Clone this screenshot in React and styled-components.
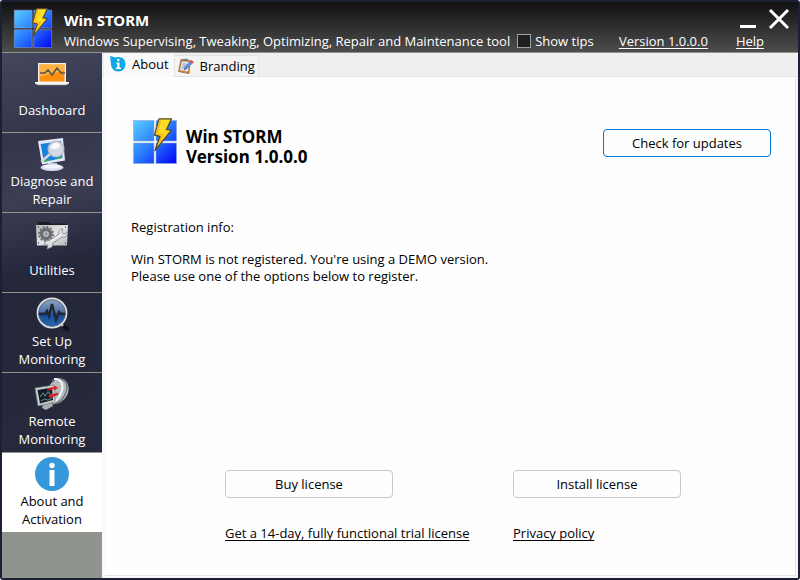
import styled, { createGlobalStyle } from "styled-components";
import { useId, useState } from "react";

const Globalstyle = createGlobalStyle`
  * { box-sizing: border-box; }
  body {
    margin: 0;
    background: #fff;
    font-family: "Open Sans", "Noto Sans", sans-serif;
    font-size: 13px;
    line-height: 18px;
    color: #000;
  }
  h1, h2, p { margin: 0; }
  h1, h2 { font-family: "Noto Sans", sans-serif; }
  button, input { font: inherit; }
  svg { display: block; }
`;

const Logo = ({ size }) => {
  const id = useId();
  return (
    <svg width={size} height={size} viewBox="0 0 44 46" aria-hidden="true">
      <defs>
        <linearGradient id={id} gradientUnits="userSpaceOnUse" x1="0" y1="2" x2="44" y2="46">
          <stop offset="0" stopColor="#5cd0ff" />
          <stop offset="0.5" stopColor="#2878ff" />
          <stop offset="1" stopColor="#0000f4" />
        </linearGradient>
      </defs>
      <path
        d="M.5 2.500h20.500v20.500H.5zM23 2.500h20.500v20.500H23zM.5 25h20.500v20.500H.5zM23 25h20.500v20.500H23z"
        fill={`url(#${id})`}
        stroke="#8ba6d6"
        strokeWidth="0.6"
      />
      <path
        d="M26 .8L38.500 .8L33.500 11.500L38.500 12.200L22 32.500L27 18.500L21.500 17Z"
        fill="#ffdd22"
        stroke="#514a32"
        strokeWidth="1.300"
        strokeLinejoin="round"
      />
      <path d="M27.500 2.500L24 15.500L30 17L26 26" fill="none" stroke="#ffb31a" strokeWidth="1.500" />
    </svg>
  );
};

const LaptopIcon = () => (
  <svg width="36" height="36" viewBox="0 0 36 36" aria-hidden="true">
    <path d="M4 7h28v20H4z" fill="#f5f1ea" />
    <path d="M5.500 8.500h25v17h-25z" fill="#fb8f12" />
    <path d="M5.500 8.500h25v6l-25 6z" fill="#ffb347" />
    <path d="M6 17h5l3-3 4 5 5-7 4 5h4" fill="none" stroke="#5b554c" strokeWidth="1.600" />
    <path d="M1 26h13l1 1h6l1-1h13v1.500L32 29H4l-3-1.500z" fill="#f7f5f1" />
    <path d="M4 29h28" stroke="#8a8a92" strokeWidth="0.600" />
  </svg>
);

const DiagnoseIcon = () => (
  <svg width="36" height="36" viewBox="0 0 36 36" aria-hidden="true">
    <path d="M14 27h9l1 4h-9z" fill="#bfc2e0" />
    <ellipse cx="18" cy="31.500" rx="11.500" ry="3.500" fill="#d9dbf2" />
    <ellipse cx="18" cy="30.500" rx="9" ry="2" fill="#f3f3ff" />
    <path d="M4 5L29 2L31 24.500L8 28.500z" fill="#e8e8fb" />
    <path d="M6.500 8L27 5L28.500 22L10 26z" fill="#1681d8" />
    <path d="M10 24.500l6-1.500v1.500L10 26z M23 21.500l5-1v1.500l-5 1z" fill="#3db63f" />
    <path d="M16 18L8 25" stroke="#d3d8df" strokeWidth="2.600" strokeLinecap="round" />
    <circle cx="22" cy="13" r="7.800" fill="#d5dae6" stroke="#b9bdca" strokeWidth="1.400" />
    <path d="M16.500 12a6 6 0 0 1 8-4.800c2 1 2 3 0 4.500s-5 2-8 .3z" fill="#f8fbff" />
  </svg>
);

const UtilitiesIcon = () => (
  <svg width="36" height="36" viewBox="0 0 36 36" aria-hidden="true">
    <defs>
      <linearGradient id="plate" x1="0" y1="0" x2="1" y2="1">
        <stop offset="0" stopColor="#b5b7b9" />
        <stop offset="0.500" stopColor="#e5e5e5" />
        <stop offset="1" stopColor="#b9babc" />
      </linearGradient>
    </defs>
    <path d="M4 6h11l1 1.500h17v3H4z" fill="#1c1d23" />
    <path d="M2 9h32l-1 20.500H3z" fill="url(#plate)" />
    <circle cx="12" cy="18" r="4.500" fill="none" stroke="#6b6d70" strokeWidth="3.500" />
    <circle cx="12" cy="18" r="7" fill="none" stroke="#6b6d70" strokeWidth="1.800" strokeDasharray="2.200 1.460" />
    <circle cx="12" cy="18" r="2" fill="#9a9c9e" />
    <path
      d="M10 29l2-4 4-1 9-6c-1-3 1-6 4-5l-1 3 2 2 3-2c1 4-2 6-5 5l-9 6-1 4-5 2 1-4z"
      fill="#dfe0e2"
      stroke="#808286"
      strokeWidth="0.800"
    />
    <path d="M17 25l10-6" stroke="#fff" strokeWidth="1" />
    <path d="M4 11h1M31 11h1M4 27h1M31 27h1" stroke="#55585c" strokeWidth="1.500" />
  </svg>
);

const MonitorIcon = () => (
  <svg width="36" height="36" viewBox="0 0 36 36" aria-hidden="true">
    <defs>
      <linearGradient id="lens" x1="0" y1="0" x2="0" y2="1">
        <stop offset="0" stopColor="#96a9c4" />
        <stop offset="0.450" stopColor="#4f74aa" />
        <stop offset="0.550" stopColor="#164d99" />
        <stop offset="1" stopColor="#2c69b2" />
      </linearGradient>
    </defs>
    <path d="M28 29l5 4" stroke="#111218" strokeWidth="4.500" strokeLinecap="round" />
    <path d="M26 27l3 3" stroke="#a8aaaf" strokeWidth="3" />
    <circle cx="18" cy="17" r="14.500" fill="url(#lens)" stroke="#dcdddf" strokeWidth="1.800" />
    <circle cx="18" cy="17" r="13.300" fill="none" stroke="#56637c" strokeWidth="0.800" />
    <path d="M5 18h6l2-3 2 5 3-12 4 16 3-8 2 2h4" fill="none" stroke="#22262f" strokeWidth="2.400" />
  </svg>
);

const RemoteIcon = () => (
  <svg width="36" height="36" viewBox="0 0 36 36" aria-hidden="true">
    <ellipse cx="24" cy="15" rx="10" ry="13" transform="rotate(25 24 15)" fill="#b4bbbd" />
    <path d="M18 5c8-6 18 0 14 11-2 7-7 11-13 12" fill="none" stroke="#687274" strokeWidth="1.300" />
    <path d="M20 3c8-1 10 7 7 14-2 5-5 8-8 10" fill="none" stroke="#f4f6f6" strokeWidth="2" />
    <path d="M9 28l9-2 1 4-7 4-4-2z" fill="#aaaead" />
    <path d="M1 12L20 9L21 26L4 30z" fill="#c9cfcf" stroke="#707778" strokeWidth="0.700" />
    <path d="M3.500 14L18 11.500L19 24L6 27.500z" fill="#121e27" />
    <path d="M6 21l3-4 2 3 3-4 4 4M7 25l4-2 3 1 4-2" fill="none" stroke="#577380" strokeWidth="1.200" />
    <path d="M13 13l7-2v-1.500l4 2-3 3-.5-1.500-7 1.500zM24 16.500l-6 2V17l-4 3.500 4 2V21l6-2z" fill="#e51d20" />
  </svg>
);

const InfoIcon = () => (
  <svg width="36" height="36" viewBox="0 0 36 36" aria-hidden="true">
    <circle cx="18" cy="18" r="17" fill="#3498db" />
    <circle cx="18" cy="9.500" r="2.700" fill="#fff" />
    <path d="M15.500 14h5v16h-5z" fill="#fff" />
  </svg>
);

const TabInfoIcon = () => (
  <svg width="16" height="16" viewBox="0 0 16 16" aria-hidden="true">
    <path d="M0 0l6 1.500C11 0 15.500 3 15.500 8A7 7 0 0 1 8.500 15.500C4 15.500 1 12 1 8z" fill="#0da7ea" />
    <circle cx="8.300" cy="4" r="1.300" fill="#fff" />
    <path d="M6.500 6.500h3v5H11V13H6v-1.500h1.300V8h-.8z" fill="#fff" />
  </svg>
);

const TabBrandIcon = () => (
  <svg width="16" height="16" viewBox="0 0 16 16" aria-hidden="true">
    <path d="M3 1.500l9 1-1 13-10.500-2z" fill="#d08a42" stroke="#8b572d" strokeWidth="0.700" />
    <path d="M4 3.500l7 .5-1 9.500-8-1.500z" fill="#e4ecfb" />
    <path d="M5.500 .8h4l.5 2H5z" fill="#777e8c" />
    <path d="M4.500 6h4M4 8h4M3.500 10h3" stroke="#7b91c5" strokeWidth="0.900" />
    <path d="M6 12l1-3L12 3.500l2.200 1.800-5.500 5.500z" fill="#6b93e0" stroke="#2e4d94" strokeWidth="0.600" />
    <path d="M11.800 3.500l1.700-1.500 2.300 2-1.500 1.500z" fill="#e84631" />
  </svg>
);

const menuitems = [
  { title: "Dashboard", icon: LaptopIcon },
  { title: "Diagnose and Repair", icon: DiagnoseIcon },
  { title: "Utilities", icon: UtilitiesIcon },
  { title: "Set Up Monitoring", icon: MonitorIcon },
  { title: "Remote Monitoring", icon: RemoteIcon },
  { title: "About and Activation", icon: InfoIcon },
];

const Titlebar = () => {
  const [tips, settips] = useState(false);
  return (
    <Titlestyled>
      <Logo size={40} />
      <Headings>
        <Toprow>
          <h1>Win STORM</h1>
          <Windowbuttons>
            <Iconbutton aria-label="Minimize">
              <svg width="18" height="22" viewBox="0 0 18 22">
                <path d="M1 18.500h16" stroke="#fff" strokeWidth="3" />
              </svg>
            </Iconbutton>
            <Iconbutton aria-label="Close">
              <svg width="22" height="22" viewBox="0 0 22 22">
                <path d="M2 2l18 18M20 2L2 20" stroke="#fff" strokeWidth="3" />
              </svg>
            </Iconbutton>
          </Windowbuttons>
        </Toprow>
        <Inforow>
          <p>Windows Supervising, Tweaking, Optimizing, Repair and Maintenance tool</p>
          <Tipslabel>
            <input type="checkbox" checked={tips} onChange={() => settips(!tips)} />
            Show tips
          </Tipslabel>
          <Links>
            <Textlink href="#version">Version 1.0.0.0</Textlink>
            <Textlink href="#help">Help</Textlink>
          </Links>
        </Inforow>
      </Headings>
    </Titlestyled>
  );
};

const About = () => (
  <Panel>
    <Product>
      <Logo size={46} />
      <h2>
        Win STORM
        <br />
        Version 1.0.0.0
      </h2>
      <Button $primary>Check for updates</Button>
    </Product>
    <Registration>
      <p>Registration info:</p>
      <p>
        Win STORM is not registered. You're using a DEMO version.
        <br />
        Please use one of the options below to register.
      </p>
    </Registration>
    <Options>
      <Button>Buy license</Button>
      <Button>Install license</Button>
      <Textlink href="#trial">Get a 14-day, fully functional trial license</Textlink>
      <Textlink href="#privacy">Privacy policy</Textlink>
    </Options>
  </Panel>
);

const App = () => {
  const [current, setcurrent] = useState("About and Activation");
  return (
    <Windowstyled>
      <Globalstyle />
      <Titlebar />
      <Body>
        <Sidebar>
          <Menu>
            {menuitems.map(({ title, icon: Icon }) => (
              <Menuitem key={title} $active={title === current} onClick={() => setcurrent(title)}>
                <Icon />
                <span>{title}</span>
              </Menuitem>
            ))}
          </Menu>
        </Sidebar>
        <Main>
          <Tabs role="tablist">
            <Tab role="tab" aria-selected="true" $active>
              <TabInfoIcon />
              About
            </Tab>
            <Tab role="tab" aria-selected="false">
              <TabBrandIcon />
              Branding
            </Tab>
          </Tabs>
          <About />
        </Main>
      </Body>
    </Windowstyled>
  );
};

const Windowstyled = styled.div`
  display: flex;
  flex-direction: column;
  min-height: 100vh;
  border: 2px solid #1c2035;
  border-radius: 3px;
`;

const Titlestyled = styled.header`
  display: flex;
  gap: 11px;
  height: 51px;
  padding: 6px 8px 0 11px;
  color: #fff;
  background: linear-gradient(#111, #4d4d4d);
  border-bottom: 1px solid #8f948c;
`;

const Headings = styled.div`
  flex: 1;
`;

const Toprow = styled.div`
  display: flex;
  justify-content: space-between;
  height: 24px;
  h1 {
    font-size: 15px;
    line-height: 24px;
  }
`;

const Windowbuttons = styled.div`
  display: flex;
  gap: 11px;
`;

const Iconbutton = styled.button`
  height: 22px;
  padding: 0;
  border: 0;
  background: none;
`;

const Inforow = styled.div`
  display: flex;
  align-items: center;
  white-space: nowrap;
`;

const Tipslabel = styled.label`
  display: flex;
  align-items: center;
  gap: 4px;
  margin-left: 7px;
  input {
    appearance: none;
    width: 14px;
    height: 14px;
    margin: 0;
    background: #202020;
    border: 1px solid #a0a0a0;
  }
  input:checked {
    background: #3498db;
  }
`;

const Links = styled.div`
  display: flex;
  gap: 28px;
  margin-left: auto;
  padding-right: 26px;
`;

const Textlink = styled.a`
  justify-self: start;
  color: inherit;
  text-decoration: underline;
  text-underline-offset: 2px;
  text-decoration-skip-ink: none;
  white-space: nowrap;
`;

const Body = styled.div`
  flex: 1;
  display: flex;
`;

const Sidebar = styled.nav`
  flex: none;
  width: 100px;
  background: #8f958e;
`;

const Menu = styled.div`
  background: linear-gradient(165deg, #43465c, #33364b 18%, #3c3f54 30%, #24273a 45%, #282b3e);
`;

const Menuitem = styled.button`
  display: flex;
  flex-direction: column;
  align-items: center;
  width: 100%;
  height: 80px;
  padding: 3px 6px 4px;
  border: 0;
  border-bottom: 1px solid #8f948c;
  color: ${(props) => (props.$active ? "#000" : "#fff")};
  background: ${(props) => (props.$active ? "#fff" : "transparent")};
  span {
    flex: 1;
    display: flex;
    align-items: center;
  }
`;

const Main = styled.main`
  flex: 1;
  display: flex;
  flex-direction: column;
  padding: 0 2px 2px 3px;
  background: #f9f9f9;
`;

const Tabs = styled.div`
  display: flex;
  align-items: flex-end;
  height: 24px;
  margin: 0 -2px 0 -3px;
  padding-left: 2px;
  background: #efefef;
  border-bottom: 1px solid #e3e3e3;
`;

const Tab = styled.button`
  display: flex;
  align-items: center;
  gap: 6px;
  height: ${(props) => (props.$active ? "24px" : "22px")};
  margin-bottom: -1px;
  padding: ${(props) => (props.$active ? "0 5px 2px 6px" : "0 3px")};
  border: 1px solid #e3e3e3;
  border-width: ${(props) => (props.$active ? "0" : "1px")};
  background: ${(props) => (props.$active ? "#f9f9f9" : "#f3f3f3")};
`;

const Panel = styled.section`
  flex: 1;
  display: flex;
  flex-direction: column;
  padding: 41px 24px 33px 26px;
  background: #fefefe;
  border-right: 1px solid #e3e3e3;
  border-bottom: 1px solid #e3e3e3;
`;

const Product = styled.div`
  display: flex;
  align-items: flex-start;
  padding-left: 1px;
  h2 {
    margin-left: 8px;
    padding-top: 9px;
    font-size: 17px;
    line-height: 20px;
  }
  button {
    margin: 11px 0 0 auto;
  }
`;

const Registration = styled.div`
  display: flex;
  flex-direction: column;
  gap: 15px;
  padding-top: 52px;
  line-height: 17px;
`;

const Button = styled.button`
  width: 168px;
  height: 28px;
  padding: 0;
  background: #fdfdfd;
  border: 1px solid ${(props) => (props.$primary ? "#0078d4" : "#c8c8c8")};
  border-radius: 4px;
`;

const Options = styled.div`
  display: grid;
  grid-template-columns: 288px 168px;
  justify-content: center;
  row-gap: 26px;
  margin-top: auto;
  padding-left: 4px;
`;

export default App;
